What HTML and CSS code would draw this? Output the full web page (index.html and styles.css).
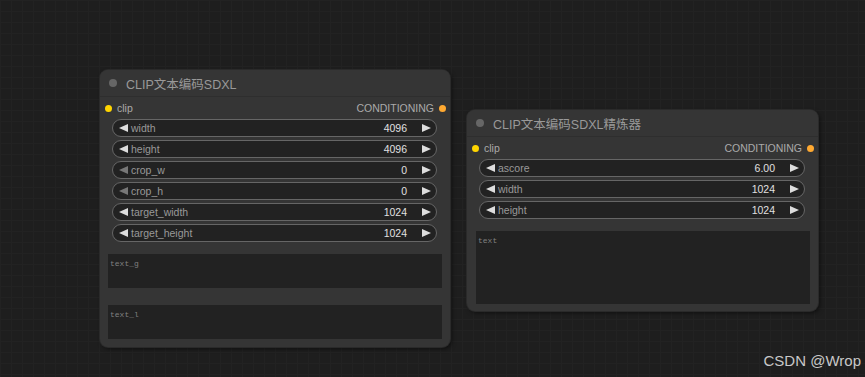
FILE: index.html
```html
<!DOCTYPE html>
<html lang="en">
<head>
    <meta charset="UTF-8">
    <title>ComfyUI</title>
    <link rel="stylesheet" href="styles.css">
</head>
<body>
    <div class="canvas">
        <div class="node node1">
            <div class="title"><span class="tdot"></span>CLIP文本编码SDXL</div>
            <div class="slots">
                <span class="slot-in"><i class="dot yellow"></i>clip</span>
                <span class="slot-out">CONDITIONING<i class="dot orange"></i></span>
            </div>
            <div class="widget"><span class="arr l"></span><span class="name">width</span><span class="val">4096</span><span class="arr r"></span></div>
            <div class="widget"><span class="arr l"></span><span class="name">height</span><span class="val">4096</span><span class="arr r"></span></div>
            <div class="widget"><span class="arr l dim"></span><span class="name">crop_w</span><span class="val">0</span><span class="arr r"></span></div>
            <div class="widget"><span class="arr l dim"></span><span class="name">crop_h</span><span class="val">0</span><span class="arr r"></span></div>
            <div class="widget"><span class="arr l"></span><span class="name">target_width</span><span class="val">1024</span><span class="arr r"></span></div>
            <div class="widget"><span class="arr l"></span><span class="name">target_height</span><span class="val">1024</span><span class="arr r"></span></div>
            <div class="text first short">text_g</div>
            <div class="text second short">text_l</div>
        </div>

        <div class="node node2">
            <div class="title"><span class="tdot"></span>CLIP文本编码SDXL精炼器</div>
            <div class="slots">
                <span class="slot-in"><i class="dot yellow"></i>clip</span>
                <span class="slot-out">CONDITIONING<i class="dot orange"></i></span>
            </div>
            <div class="widget"><span class="arr l"></span><span class="name">ascore</span><span class="val">6.00</span><span class="arr r"></span></div>
            <div class="widget"><span class="arr l"></span><span class="name">width</span><span class="val">1024</span><span class="arr r"></span></div>
            <div class="widget"><span class="arr l"></span><span class="name">height</span><span class="val">1024</span><span class="arr r"></span></div>
            <div class="text first tall">text</div>
        </div>

        <div class="mark">CSDN @Wrop</div>
    </div>
</body>
</html>
```

FILE: styles.css
```css
*{
    margin: 0;
    padding: 0;
    box-sizing: border-box;
}
body{
    width: 865px;
    height: 377px;
    overflow: hidden;
    background-color: #1e1e1e;
    font-family: "Liberation Sans", Arial, "Noto Sans CJK SC", sans-serif;
}
.canvas{
    position: relative;
    width: 865px;
    height: 377px;
    background-color: #1e1e1e;
    background-image:
        linear-gradient(to right, #222 1px, transparent 1px),
        linear-gradient(to bottom, #222 1px, transparent 1px);
    background-size: 11px 11px;
}
.node{
    position: absolute;
    display: flex;
    flex-direction: column;
    background-color: #353535;
    border-radius: 8px;
    box-shadow: 0 0 0 1px #2a2a2a, 2px 2px 4px rgba(0,0,0,0.5);
}
.node1{
    left: 100px;
    top: 70px;
    width: 350px;
    height: 277px;
}
.node2{
    left: 467px;
    top: 110px;
    width: 351px;
    height: 201px;
}
.title{
    height: 27px;
    display: flex;
    align-items: center;
    padding-left: 9px;
    color: #999;
    font-size: 12.5px;
    border-bottom: 1px solid #2e2e2e;
    background-color: #353535;
    border-radius: 8px 8px 0 0;
}
.tdot{
    width: 8px;
    height: 8px;
    border-radius: 50%;
    background-color: #666;
    margin-right: 9px;
}
.slots{
    height: 22px;
    display: flex;
    justify-content: space-between;
    align-items: center;
    padding: 0 4px 0 5px;
    font-size: 10.5px;
    color: #aaa;
}
.slot-in, .slot-out{
    display: flex;
    align-items: center;
}
.dot{
    display: inline-block;
    width: 7px;
    height: 7px;
    border-radius: 50%;
}
.yellow{
    background-color: #ffd500;
    margin-right: 5px;
}
.orange{
    background-color: #ffa931;
    margin-left: 5px;
}
.widget{
    height: 18px;
    margin: 0 13px 3px 12px;
    display: flex;
    align-items: center;
    background-color: #222;
    border: 1px solid #666;
    border-radius: 9px;
    font-size: 10.5px;
    padding: 0 5px 0 6px;
}
.name{
    color: #999;
    margin-left: 3px;
    flex: 1;
}
.val{
    color: #e0e0e0;
    margin-right: 15px;
}
.arr{
    width: 0;
    height: 0;
    border-top: 4.5px solid transparent;
    border-bottom: 4.5px solid transparent;
}
.arr.l{
    border-right: 9px solid #ddd;
}
.arr.r{
    border-left: 9px solid #ddd;
}
.arr.l.dim{
    border-right-color: #777;
}
.text{
    margin: 0 8px;
    background-color: #222;
    color: #808080;
    font-family: "Liberation Mono", "DejaVu Sans Mono", monospace;
    font-size: 8px;
    padding: 5px 2px;
}
.first{
    margin-top: 9px;
}
.second{
    margin-top: 17px;
}
.short{
    height: 34px;
}
.tall{
    height: 73px;
    margin-left: 9px;
}
.mark{
    position: absolute;
    right: 4px;
    bottom: 8px;
    color: #c8c8c8;
    font-size: 15px;
}
```
